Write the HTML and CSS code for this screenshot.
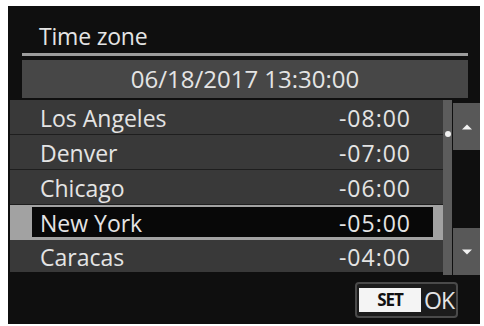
FILE: index.html
```html
<!DOCTYPE html>
<html>
<head>
<meta charset="utf-8">
<link rel="stylesheet" href="styles.css">
</head>
<body>
<div class="screen">
  <div class="title">Time zone</div>
  <div class="rule"></div>
  <div class="date">06/18/2017 13:30:00</div>
  <div class="main">
    <div class="list">
      <div class="row"><span>Los Angeles</span><span class="off">-08:00</span></div>
      <div class="row"><span>Denver</span><span class="off">-07:00</span></div>
      <div class="row"><span>Chicago</span><span class="off">-06:00</span></div>
      <div class="row selected"><div class="inner"><span>New York</span><span class="off">-05:00</span></div></div>
      <div class="row"><span>Caracas</span><span class="off">-04:00</span></div>
    </div>
    <div class="track"><div class="thumb"></div></div>
    <div class="buttons">
      <div class="btn"><svg width="12" height="6" viewBox="0 0 12 6"><path d="M1 5.5 L6 0.5 L11 5.5 Z" fill="#f2f2f2"/></svg></div>
      <div class="btn"><svg width="12" height="6" viewBox="0 0 12 6"><path d="M1 0.5 L6 5.5 L11 0.5 Z" fill="#f2f2f2"/></svg></div>
    </div>
  </div>
  <div class="footer">
    <div class="setok"><span class="set">SET</span><span class="ok">OK</span></div>
  </div>
</div>
</body>
</html>
```
FILE: styles.css
```css
html, body {
  margin: 0;
  padding: 0;
  background: #ffffff;
}
body {
  padding: 6px 0 0 8px;
}
.screen {
  width: 472px;
  height: 318px;
  background: #0f0f0f;
  font-family: "Open Sans", "DejaVu Sans", sans-serif;
  font-weight: 500;
  color: #e4e4e4;
  display: flex;
  flex-direction: column;
  box-sizing: border-box;
}
.title {
  height: 47px;
  box-sizing: border-box;
  padding: 15px 0 0 31px;
  font-size: 23px;
  line-height: 30px;
  letter-spacing: -0.2px;
}
.rule {
  height: 3px;
  margin: 0 12px 0 14px;
  background: #9c9c9c;
}
.date {
  height: 38px;
  margin: 4px 12px 0 14px;
  background: #474747;
  text-align: center;
  font-size: 24px;
  line-height: 38px;
  letter-spacing: 0;
}
.main {
  margin-top: 2px;
  display: flex;
  height: 175px;
}
.list {
  margin-left: 2px;
  width: 433px;
  display: flex;
  flex-direction: column;
}
.row {
  height: 35px;
  box-sizing: border-box;
  background: #393939;
  border-bottom: 1px solid #1e1e1e;
  display: flex;
  justify-content: space-between;
  align-items: center;
  padding: 1px 33px 0 30px;
  font-size: 23px;
  letter-spacing: 0;
}
.off {
  letter-spacing: 1px;
  margin-right: -1px;
}
.row.selected {
  background: #a2a2a2;
  padding: 2px 10px 3px 22px;
  border-bottom: none;
  align-items: stretch;
}
.inner {
  flex: 1;
  background: #080808;
  display: flex;
  justify-content: space-between;
  align-items: center;
  padding: 1px 23px 0 8px;
}
.row:last-child {
  border-bottom: none;
  height: 32px;
}
.track {
  width: 9px;
  background: #5c5c5c;
  position: relative;
}
.thumb {
  position: absolute;
  left: 2px;
  top: 31px;
  width: 6px;
  height: 6px;
  border-radius: 50%;
  background: #f0f0f0;
}
.buttons {
  margin-left: 1px;
  width: 27px;
  display: flex;
  flex-direction: column;
  justify-content: space-between;
  padding: 3px 0 0;
}
.btn {
  height: 47px;
  background: #585858;
  display: flex;
  align-items: center;
  justify-content: center;
}
.footer {
  display: flex;
  justify-content: flex-end;
  padding: 7px 22px 0 0;
}
.setok {
  width: 103px;
  height: 36px;
  box-sizing: border-box;
  border: 2px solid #4a4a4a;
  border-radius: 4px;
  background: #1c1c1c;
  display: flex;
  align-items: center;
  padding-left: 2px;
}
.set {
  width: 62px;
  height: 24px;
  background: #f4f4f4;
  color: #111;
  font-size: 17px;
  font-weight: bold;
  line-height: 24px;
  text-align: center;
  letter-spacing: -1px;
}
.ok {
  margin-left: 3px;
  font-size: 23px;
  letter-spacing: -1px;
  color: #e4e4e4;
}
```
